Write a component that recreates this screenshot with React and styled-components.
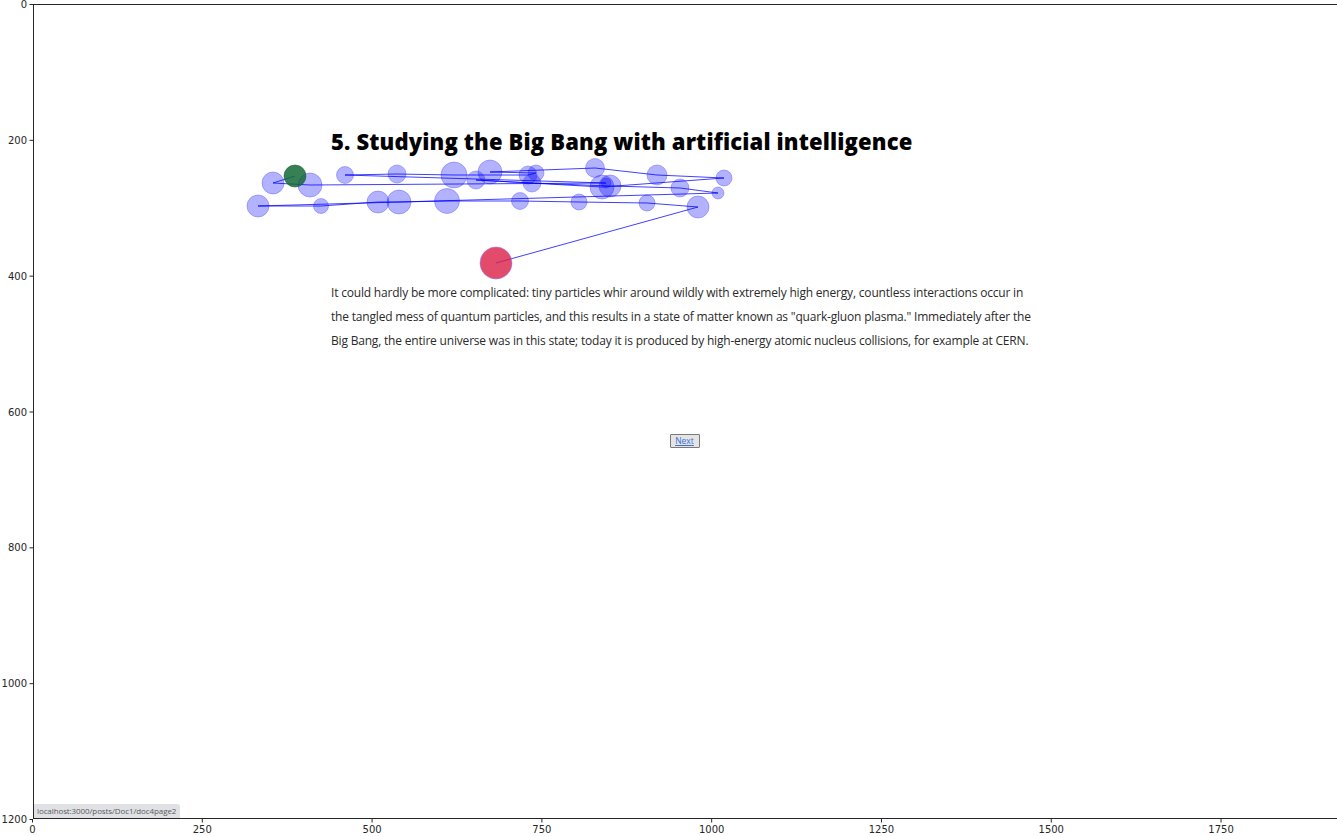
import React from "react";
import styled, { createGlobalStyle } from "styled-components";

const Global = createGlobalStyle`
  html, body { margin: 0; padding: 0; background: #fff; }
  body { width: 1337px; height: 836px; overflow: hidden; }
`;

const Figure = styled.div`
  display: flex;
  width: 1337px;
  height: 836px;
  font-family: "DejaVu Sans", sans-serif;
`;

const AxisColumn = styled.div`
  width: 33px;
  flex: none;
`;

const Right = styled.div`
  display: flex;
  flex-direction: column;
  padding-top: 4px;
`;

const Plot = styled.div`
  position: relative;
  box-sizing: border-box;
  width: 1304px;
  height: 816px;
  border-top: 1px solid #262626;
  border-left: 1px solid #262626;
  border-bottom: 1px solid #262626;
  display: flex;
  flex-direction: column;
  padding: 121px 0 0 297px;
  font-family: "Open Sans", "Noto Sans", sans-serif;
  color: #222;
  overflow: hidden;
`;

const Title = styled.h1`
  margin: 0;
  font-size: 22px;
  line-height: 30px;
  font-weight: 800;
  letter-spacing: 0.15px;
  color: #000;
  white-space: nowrap;
`;

const Paragraph = styled.p`
  margin: 125px 0 0 0;
  font-size: 12px;
  line-height: 24px;
  letter-spacing: -0.19px;
  color: #2a2a2a;
  white-space: nowrap;
`;

const Line = styled.span`
  display: block;
`;

const ButtonRow = styled.div`
  display: flex;
  justify-content: center;
  margin: 81px 0 0 -299px;
`;

const NextButton = styled.button`
  box-sizing: border-box;
  width: 30px;
  height: 14px;
  padding: 0;
  background: #e4e4e4;
  border: 1px solid #7a7a7a;
  border-radius: 1px;
  font-family: "Open Sans", sans-serif;
  font-size: 8.5px;
  line-height: 12px;
  color: #3b6fd6;
  text-decoration: underline;
`;

const StatusBar = styled.div`
  position: absolute;
  left: 0;
  bottom: 0;
  padding: 1px 4px 2px 3px;
  background: #dfe1e5;
  border-top-right-radius: 3px;
  font-family: "Open Sans", sans-serif;
  font-size: 8px;
  letter-spacing: -0.1px;
  line-height: 11px;
  color: #5a5a5a;
`;

const Overlay = styled.svg`
  position: absolute;
  left: 0;
  top: 0;
  width: 1304px;
  height: 816px;
  pointer-events: none;
`;

const XAxis = styled.svg`
  display: block;
  width: 1304px;
  height: 17px;
  margin-left: -1px;
  overflow: visible;
`;

const YAxis = styled.svg`
  display: block;
  width: 33px;
  height: 836px;
`;

const OX = 34;
const OY = 5;

const fixations = [
  [295, 176, 11],
  [273, 183, 11],
  [310, 185, 12],
  [606, 183, 5],
  [345, 175, 8.5],
  [397, 174, 9],
  [454, 175, 13],
  [528, 175, 9],
  [536, 173, 8],
  [490, 172, 12],
  [595, 168, 9.5],
  [657, 175, 10],
  [724, 178, 8],
  [602, 187, 12],
  [476, 180, 9],
  [532, 183, 9],
  [610, 186, 11],
  [680, 188, 9],
  [718, 193, 6],
  [258, 206, 11],
  [321, 206, 7.5],
  [378, 202, 11],
  [399, 202, 12],
  [447, 201, 12.5],
  [520, 201, 8.5],
  [579, 202, 8],
  [647, 203, 8],
  [698, 207, 11],
  [496, 263, 16],
];

const yTicks = [0, 200, 400, 600, 800, 1000, 1200];
const xTicks = [0, 250, 500, 750, 1000, 1250, 1500, 1750];
const SCALE = 815 / 1200;
const XSCALE = 1304 / 1920;

function Scanpath() {
  const last = fixations.length - 1;
  const pts = fixations.map(([x, y]) => `${x - OX},${y - OY}`).join(" ");
  return (
    <Overlay viewBox="0 0 1304 816">
      {fixations.map(([x, y, r], i) =>
        i === 0 || i === last ? null : (
          <circle
            key={i}
            cx={x - OX}
            cy={y - OY}
            r={r}
            fill="rgba(0,0,255,0.3)"
            stroke="rgba(60,60,255,0.35)"
            strokeWidth="1"
          />
        )
      )}
      <polyline points={pts} fill="none" stroke="rgba(0,0,255,0.75)" strokeWidth="1" />
      <circle cx={fixations[0][0] - OX} cy={fixations[0][1] - OY} r={fixations[0][2]} fill="rgba(20,105,55,0.85)" stroke="rgba(20,90,50,0.5)" />
      <circle cx={fixations[last][0] - OX} cy={fixations[last][1] - OY} r={fixations[last][2]} fill="rgba(220,30,70,0.8)" stroke="rgba(150,120,255,0.6)" />
    </Overlay>
  );
}

export default function App() {
  return (
    <>
      <Global />
      <Figure>
        <AxisColumn>
          <YAxis viewBox="0 0 33 836">
            {yTicks.map((t) => {
              const y = 4.5 + t * SCALE;
              return (
                <g key={t}>
                  <line x1="29.5" x2="33" y1={y} y2={y} stroke="#262626" strokeWidth="1" />
                  <text x="27" y={y + 3.5} textAnchor="end" fontSize="10" fontFamily="DejaVu Sans" fill="#262626">
                    {t}
                  </text>
                </g>
              );
            })}
          </YAxis>
        </AxisColumn>
        <Right>
          <Plot>
            <Title>5. Studying the Big Bang with artificial intelligence</Title>
            <Paragraph>
              <Line>It could hardly be more complicated: tiny particles whir around wildly with extremely high energy, countless interactions occur in</Line>
              <Line>the tangled mess of quantum particles, and this results in a state of matter known as "quark-gluon plasma." Immediately after the</Line>
              <Line>Big Bang, the entire universe was in this state; today it is produced by high-energy atomic nucleus collisions, for example at CERN.</Line>
            </Paragraph>
            <ButtonRow>
              <NextButton>Next</NextButton>
            </ButtonRow>
            <Scanpath />
            <StatusBar>localhost:3000/posts/Doc1/doc4page2</StatusBar>
          </Plot>
          <XAxis viewBox="0 0 1304 17">
            {xTicks.map((t) => {
              const x = 0.5 + t * XSCALE;
              return (
                <g key={t}>
                  <line x1={x} x2={x} y1="0" y2="3.5" stroke="#262626" strokeWidth="1" />
                  <text x={x} y="14" textAnchor="middle" fontSize="10" fontFamily="DejaVu Sans" fill="#262626">
                    {t}
                  </text>
                </g>
              );
            })}
          </XAxis>
        </Right>
      </Figure>
    </>
  );
}
